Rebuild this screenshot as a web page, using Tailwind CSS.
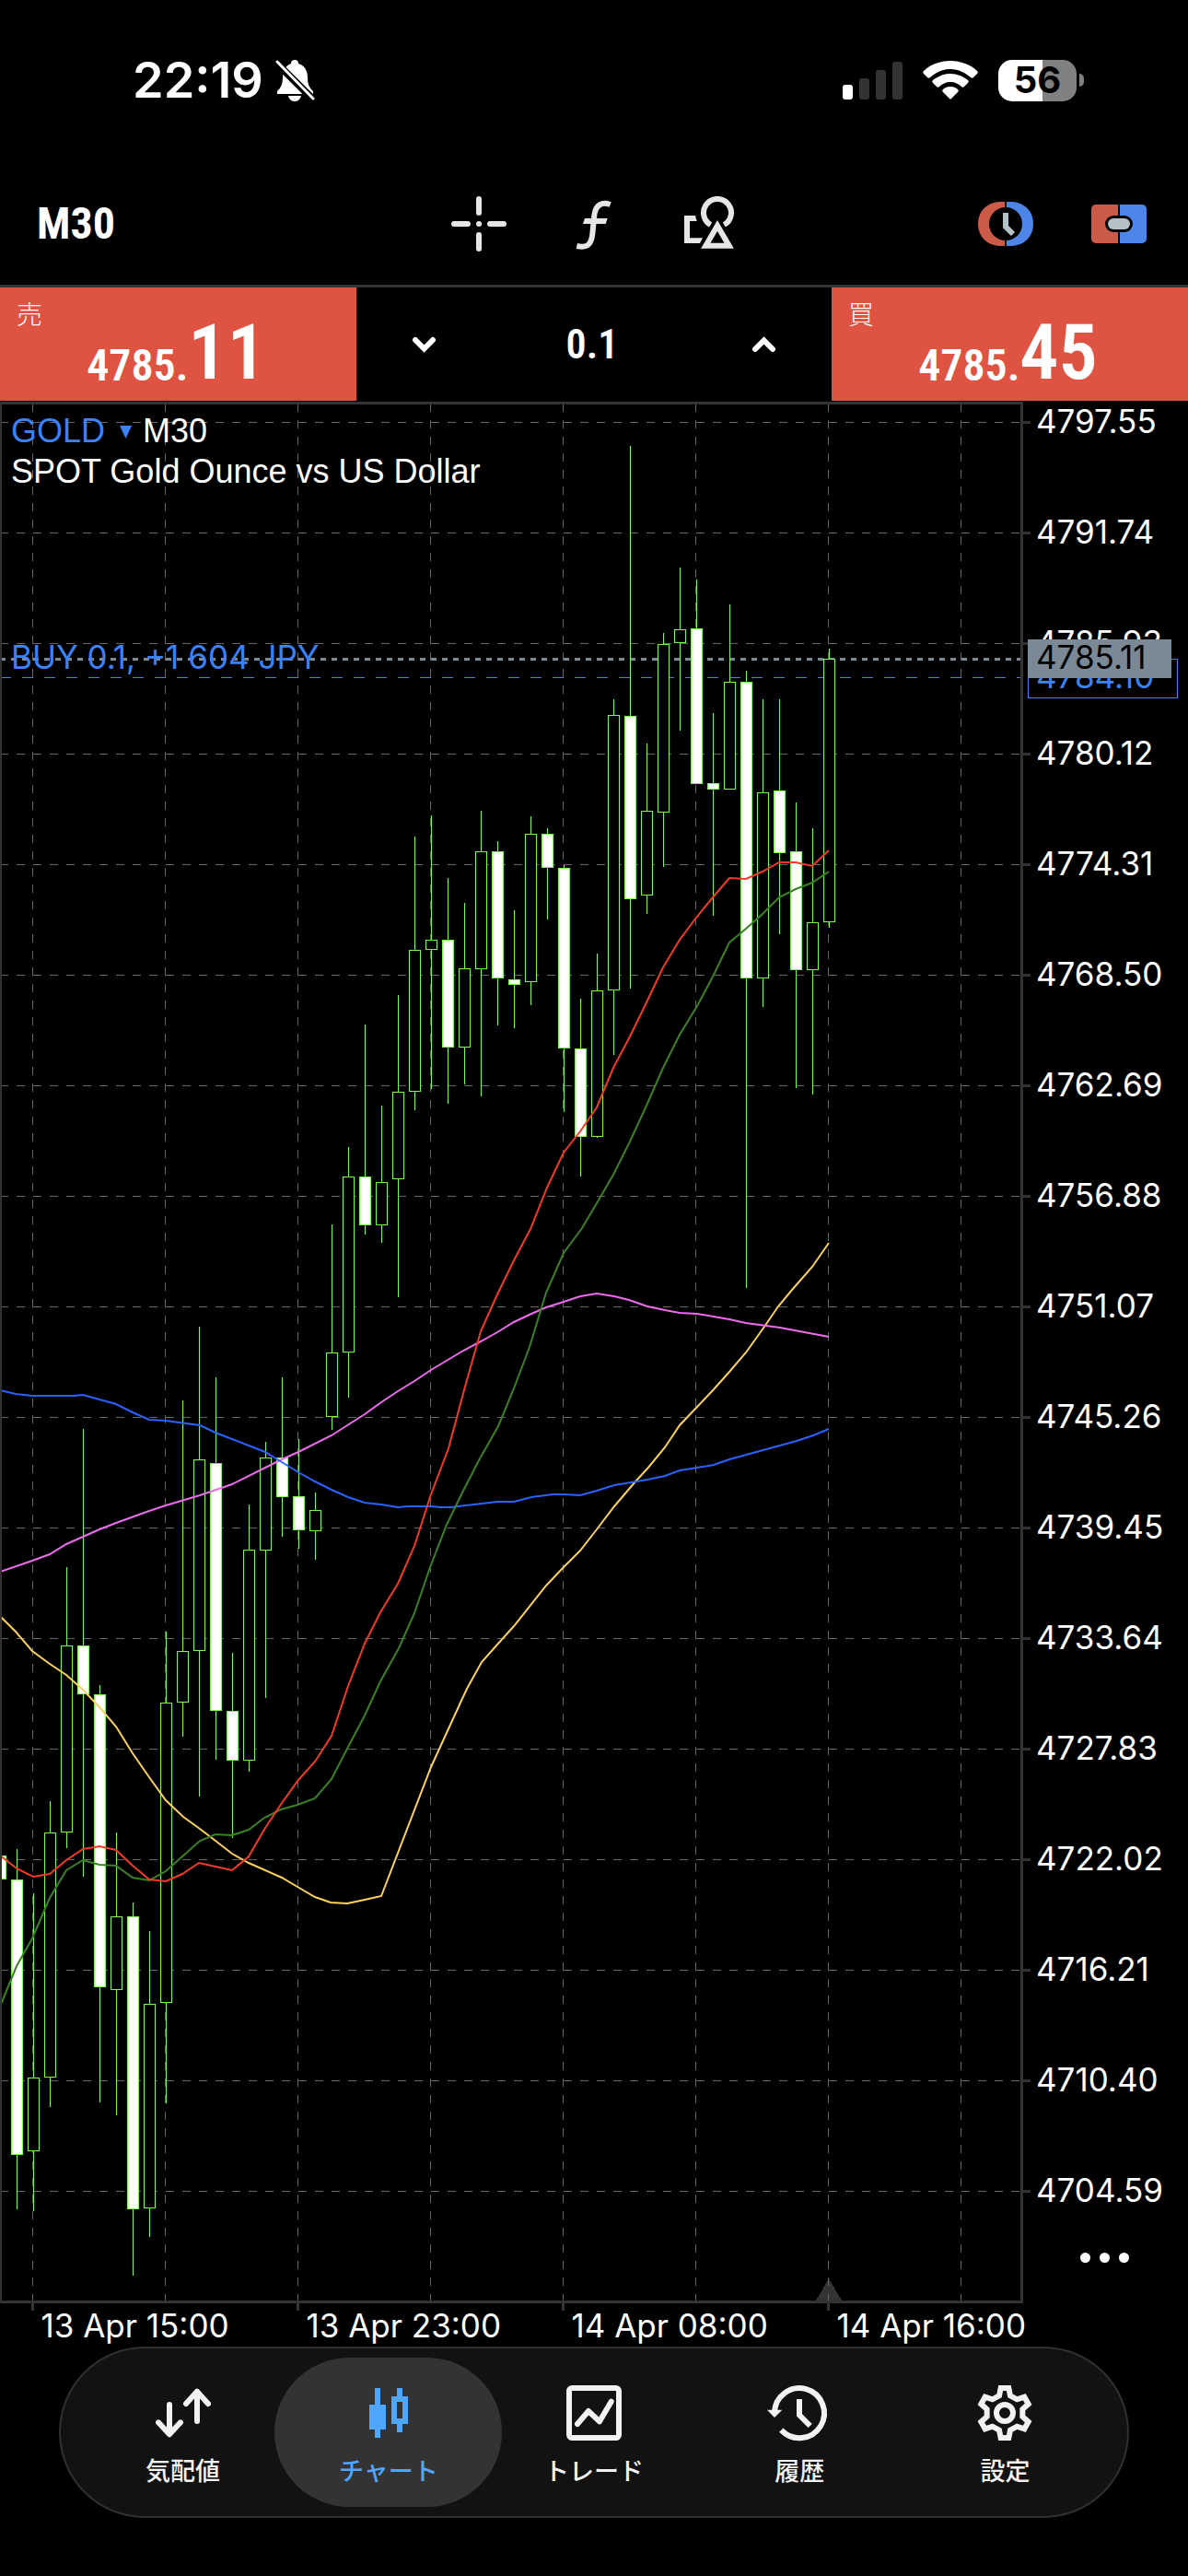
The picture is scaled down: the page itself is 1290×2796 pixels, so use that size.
<!DOCTYPE html>
<html lang="ja">
<head>
    <title>GOLD M30</title>
    <meta charset="UTF-8">
    <meta name="viewport" content="width=device-width, initial-scale=1">
    <script src="https://cdn.jsdelivr.net/npm/@tailwindcss/browser@4"></script>
</head>
<body class="bg-black text-white font-['Inter','Noto_Sans_CJK_JP',sans-serif]">

    <!-- status bar -->
    <div class="flex h-[177px] items-center justify-between pr-[113px] pb-[3px] pl-36">
        <div class="flex items-center gap-3">
            <span class="text-[54px] leading-none font-semibold">22:19</span>
            <svg class="h-12 w-11" viewBox="0 0 44 48" fill="#fff">
                <path d="M22 2c3 0 4 2 4 4 7 2 10 8 10 15 0 9 3 12 6 15v3H3v-3c3-3 6-6 6-15C9 14 12 8 18 6c0-2 1-4 4-4z"/>
                <path d="M15 41h14c-1 4-4 6-7 6s-6-2-7-6z"/>
                <path d="M2 5L42 45" stroke="#000" stroke-width="8"/>
                <path d="M3 4L42 44" stroke="#fff" stroke-width="3" stroke-linecap="round"/>
            </svg>
        </div>
        <div class="flex items-center gap-[22px]">
            <svg class="h-[42px] w-[65px]" viewBox="0 0 65 42">
                <rect x="0" y="26" width="11" height="16" rx="3" fill="#fff"/>
                <rect x="18" y="19" width="11" height="23" rx="3" fill="#333"/>
                <rect x="36" y="10" width="11" height="32" rx="3" fill="#333"/>
                <rect x="54" y="1" width="11" height="41" rx="3" fill="#333"/>
            </svg>
            <svg class="h-[42px] w-[60px]" viewBox="0 0 60 42" fill="#fff">
                <path d="M30 0C41 0 52 4 59 11c1 1 1 2 0 3l-4 4c-1 1-2 1-3 0-6-5-13-9-22-9S14 13 8 18c-1 1-2 1-3 0l-4-4c-1-1-1-2 0-3C8 4 19 0 30 0z"/>
                <path d="M30 14c7 0 14 3 19 7 1 1 1 2 0 3l-4 4c-1 1-2 1-3 0-3-3-7-5-12-5s-9 2-12 5c-1 1-2 1-3 0l-4-4c-1-1-1-2 0-3 5-4 12-7 19-7z"/>
                <path d="M30 28c3 0 6 1 8 3 1 1 1 2 0 3l-7 7c-1 1-1 1-2 0l-7-7c-1-1-1-2 0-3 2-2 5-3 8-3z"/>
            </svg>
            <div class="flex items-center gap-[3px]">
                <div class="flex h-[45px] w-[85px] items-center justify-center rounded-[15px] bg-linear-to-r from-white from-56% to-[#808080] to-56% text-[40px] leading-none font-bold text-black">56</div>
                <div class="h-[14px] w-[5px] rounded-r-full bg-[#808080]"></div>
            </div>
        </div>
    </div>

    <!-- toolbar -->
    <header class="grid h-[132px] grid-cols-[1fr_310px_1fr] items-center font-['Liberation_Sans_Narrow','Roboto_Condensed','Liberation_Sans',sans-serif]">
        <button class="justify-self-start pl-10 text-5xl leading-none font-bold">M30</button>
        <div class="flex justify-between">
            <button aria-label="Crosshair">
                <svg class="size-[60px]" viewBox="0 0 60 60" stroke="#e6e6e6" stroke-width="6" stroke-linecap="round">
                    <path d="M3 30h15M42 30h15M30 3v15M30 42v15M30 30h.1"/>
                </svg>
            </button>
            <button aria-label="Indicators">
                <svg class="size-[60px]" viewBox="403 39 180 180" fill="none" stroke="#e6e6e6" stroke-width="18">
                    <path d="M546 66C520 56 499 66 494 100L488 162C484 200 468 208 437 201"/>
                    <path d="M463 111H537L531 129H457Z" fill="#e6e6e6" stroke="none"/>
                </svg>
            </button>
            <button aria-label="Objects">
                <svg class="size-[60px]" viewBox="777 39 180 180" fill="none" stroke="#e6e6e6" stroke-width="18">
                    <path d="M872 132A45 45 0 1 1 916 132"/>
                    <path d="M894 135L932 200H856Z"/>
                    <path d="M786 102H822L827 120H804V175H846L837 192H786Z" fill="#e6e6e6" stroke="none"/>
                </svg>
            </button>
        </div>
        <div class="flex items-center gap-[63px] justify-self-end pr-[45px]">
            <button aria-label="Pending order">
                <svg class="h-12 w-[60px]" viewBox="0 0 60 48">
                    <path d="M29 0h-4C10 0 0 10 0 24s10 24 25 24h4z" fill="#cb5a49"/>
                    <path d="M31 0h4c15 0 25 10 25 24S50 48 35 48h-4z" fill="#4d86e8"/>
                    <circle cx="30" cy="24" r="18"/>
                    <path d="M30 12v15l8 8" fill="none" stroke="#b5c1c6" stroke-width="6"/>
                </svg>
            </button>
            <button aria-label="One click trading">
                <svg class="h-12 w-[60px]" viewBox="0 0 60 48">
                    <path d="M29 3H5a5 5 0 0 0-5 5v32a5 5 0 0 0 5 5h24z" fill="#cb5a49"/>
                    <path d="M31 3h24a5 5 0 0 1 5 5v32a5 5 0 0 1-5 5H31z" fill="#4d86e8"/>
                    <rect x="15" y="15" width="30" height="18" rx="9"/>
                    <rect x="18" y="18" width="24" height="12" rx="6" fill="#b5c1c6"/>
                </svg>
            </button>
        </div>
    </header>

    <!-- sell / volume / buy -->
    <section class="grid h-[127px] grid-cols-[3fr_4fr_3fr] border-t-3 border-[#333] pb-px font-['Liberation_Sans_Narrow','Roboto_Condensed','Liberation_Sans','Noto_Sans_CJK_JP',sans-serif]">
        <button class="relative flex items-end justify-center bg-[#de5341] pr-1 pb-[14px] font-semibold">
            <span class="absolute top-[14px] left-[18px] font-['Noto_Sans_CJK_JP'] text-[28px] leading-none font-light">売</span>
            <span class="text-5xl leading-none">4785.</span><span class="text-[84px] leading-[76px]">11</span>
        </button>
        <div class="flex items-center justify-between px-15">
            <button aria-label="Decrease volume">
                <svg class="h-6 w-[27px]" viewBox="0 0 27 24" fill="none" stroke="#fff" stroke-width="6" stroke-linecap="round"><path d="M4 7l9.500 9.500L23 7"/></svg>
            </button>
            <input type="text" value="0.1" aria-label="Volume" class="w-40 bg-transparent pr-1 text-center text-[44px] leading-none font-semibold">
            <button aria-label="Increase volume">
                <svg class="h-6 w-[27px]" viewBox="0 0 27 24" fill="none" stroke="#fff" stroke-width="6" stroke-linecap="round"><path d="M4 17l9.500-9.500L23 17"/></svg>
            </button>
        </div>
        <button class="relative flex items-end justify-center bg-[#de5341] pr-1 pb-[14px] font-semibold">
            <span class="absolute top-[14px] left-[18px] font-['Noto_Sans_CJK_JP'] text-[28px] leading-none font-light">買</span>
            <span class="text-5xl leading-none">4785.</span><span class="text-[84px] leading-[76px]">45</span>
        </button>
    </section>

    <!-- chart -->
    <main class="relative">
        <svg id="chart" class="block w-full" viewBox="0 436 1290 2111" shape-rendering="crispEdges">
            <path d="M886 2497L900 2473L914 2497Z" fill="#333"/>
            <g id="grid" stroke="#666" stroke-dasharray="9 9"></g>
            <path d="M0 715.500H1108" stroke="#7b8896" stroke-width="3" stroke-dasharray="6 6"/>
            <path d="M0 735.500H1108" stroke="#3b82f6" stroke-dasharray="12 12"/>
            <g id="candles" stroke="#76fb4c"></g>
            <g fill="none" stroke-width="2" shape-rendering="auto">
                <polyline stroke="#fbd15b" points="0,1754 17,1771 35,1792 54,1806 72,1818 90,1834 108,1853 126,1874 144,1903 162,1929 180,1954 199,1972 217,1985 234,1998 252,2012 270,2022 306,2038 323,2048 342,2059 359,2065 377,2066 396,2062 414,2058 468,1918 500,1848 507,1833 523,1804 540,1785 558,1765 593,1721 612,1701 630,1683 648,1660 667,1635 690,1608 703,1594 722,1571 738,1547 757,1527 775,1508 792,1489 810,1468 830,1440 845,1418 860,1400 882,1375 900,1349"/>
                <polyline stroke="#ee6bee" points="0,1706 35,1694 54,1687 72,1676 90,1668 108,1660 126,1653 162,1640 180,1634 217,1623 252,1611 288,1593 306,1584 324,1576 360,1558 396,1535 414,1522 432,1510 450,1499 468,1487 503,1466 522,1456 540,1446 558,1435 577,1426 593,1419 612,1413 630,1407 648,1404 667,1407 683,1411 703,1418 722,1422 738,1425 757,1426 792,1432 810,1436 847,1441 900,1451"/>
                <polyline stroke="#2962ff" points="0,1509 17,1513 35,1515 80,1515 90,1514 108,1519 126,1524 144,1533 162,1541 180,1542 217,1547 234,1555 252,1562 270,1569 288,1576 306,1587 324,1598 342,1608 360,1617 378,1625 396,1631 414,1633 432,1636 443,1635 468,1635 478,1636 490,1636 505,1634 540,1630 558,1630 577,1625 600,1622 613,1622 630,1623 648,1618 667,1612 703,1606 722,1602 738,1596 757,1593 775,1590 792,1584 865,1564 883,1558 900,1551"/>
                <polyline stroke="#3a8224" points="0,2178 18,2134 35,2104 54,2060 72,2030 90,2019 108,2024 126,2025 144,2038 162,2041 180,2031 198,2015 217,1998 234,1991 252,1992 270,1986 287,1973 305,1964 323,1959 342,1952 360,1931 377,1898 396,1862 413,1825 433,1789 450,1751 467,1701 485,1655 502,1620 520,1585 541,1548 558,1507 575,1462 593,1403 612,1360 632,1333 648,1306 666,1275 684,1239 702,1200 720,1159 738,1123 757,1092 774,1060 792,1023 810,1008 828,992 846,974 864,965 882,958 900,946"/>
                <polyline stroke="#f23a24" points="0,2014 18,2028 36,2037 54,2034 72,2019 90,2007 108,2004 126,2008 144,2025 162,2040 180,2042 198,2034 216,2022 234,2026 252,2030 270,2015 288,1984 306,1957 324,1932 342,1912 360,1884 378,1830 396,1784 413,1750 432,1719 450,1678 468,1622 487,1572 505,1505 522,1445 540,1405 558,1368 576,1334 594,1289 612,1251 630,1228 648,1202 666,1159 684,1125 702,1088 720,1050 738,1020 756,996 774,974 792,953 810,954 828,946 846,936 864,936 882,940 900,923"/>
            </g>
            <path id="frame" d="M.5 438V2498M0 437.500H1109.500V2498.500H0" fill="none" stroke="#333" stroke-width="3"/>
            <g id="ticks" stroke="#333" stroke-width="3"></g>
            <g id="labels" fill="#fff" font-size="35" shape-rendering="auto"></g>
            <g font-size="35">
                <rect x="1116.500" y="715.500" width="162" height="42" stroke="#3b82f6"/>
                <text x="1125" y="747" fill="#3b82f6">4784.10</text>
                <rect x="1116" y="694" width="156" height="42" fill="#7b8896"/>
                <text x="1125" y="726" fill="#000">4785.11</text>
                <text x="12" y="726" fill="#3b82f6">BUY 0.1, +1 604 JPY</text>
            </g>
        </svg>
        <div class="absolute top-[10px] left-3 flex flex-col font-['Liberation_Sans',sans-serif] text-4xl">
            <div class="flex h-11 items-center gap-2">
                <button class="flex items-center gap-4 text-[#3b82f6]">GOLD
                    <svg class="h-4 w-[13px]" viewBox="0 0 13 16" fill="#3b82f6"><path d="M0 2h13L6.500 16z"/></svg>
                </button>
                <span class="pl-1">M30</span>
            </div>
            <div class="h-11 leading-[44px]">SPOT Gold Ounce vs US Dollar</div>
        </div>
        <button aria-label="More" class="absolute right-16 bottom-[91px] flex gap-[10px]">
            <i class="size-[11px] rounded-full bg-white"></i>
            <i class="size-[11px] rounded-full bg-white"></i>
            <i class="size-[11px] rounded-full bg-white"></i>
        </button>
    </main>

    <!-- tab bar -->
    <nav class="mx-16 flex h-[186px] items-center rounded-full border-2 border-[#303030] bg-[#121212] px-[21px] text-[27px] font-medium text-[#f2f2f2]">
        <a href="#" class="-mx-3 flex h-[162px] flex-1 flex-col items-center gap-[14px] rounded-full pt-[30px]">
            <svg class="size-[60px]" viewBox="0 0 180 180" fill="none" stroke="currentColor" stroke-width="18" stroke-linecap="round" stroke-linejoin="round">
                <path d="M45 63V159M9 121L45 160L81 121M135 117V21M99 60L135 20L171 60"/>
            </svg>
            <span class="leading-10">気配値</span>
        </a>
        <a href="#" aria-current="page" class="-mx-3 flex h-[162px] flex-1 flex-col items-center gap-[14px] rounded-full bg-[#333] pt-[30px] text-[#4ea7fc]">
            <svg class="size-[60px]" viewBox="0 0 180 180" fill="currentColor">
                <path d="M45 9h18v54h18v81H63v27H45v-27H27V63h18z"/>
                <path fill-rule="evenodd" d="M117 9h18v27h18v90h-18v27h-18v-27H99V36h18zM117 54v54h18V54z"/>
            </svg>
            <span class="leading-10">チャート</span>
        </a>
        <a href="#" class="-mx-3 flex h-[162px] flex-1 flex-col items-center gap-[14px] rounded-full pt-[30px]">
            <svg class="size-[60px]" viewBox="0 0 180 180" fill="none" stroke="currentColor" stroke-width="18" stroke-linecap="round" stroke-linejoin="round">
                <rect x="9" y="9" width="162" height="162" rx="10"/>
                <path d="M36 126L72 84L108 118L146 53"/>
            </svg>
            <span class="leading-10">トレード</span>
        </a>
        <a href="#" class="-mx-3 flex h-[162px] flex-1 flex-col items-center gap-[14px] rounded-full pt-[30px]">
            <svg class="size-[60px] overflow-visible" viewBox="0 0 180 180" fill="none" stroke="currentColor" stroke-width="18">
                <path d="M9 90A81 81 0 1 1 31 146M90 45V97L125 132"/>
                <path d="M-15 80H34L9 105Z" fill="currentColor" stroke="none"/>
            </svg>
            <span class="leading-10">履歴</span>
        </a>
        <a href="#" class="-mx-3 flex h-[162px] flex-1 flex-col items-center gap-[14px] rounded-full pt-[30px]">
            <svg class="size-[60px]" viewBox="-90 -90 180 180" fill="none" stroke="currentColor" stroke-width="18">
                <circle r="27"/>
                <path d="M-18-56L-13-81H13L18-56L40-44L64-52L77-29L58-12V12L77 29L64 52L40 44L18 56L13 81H-13L-18 56L-40 44L-64 52L-77 29L-58 12V-12L-77-29L-64-52L-40-44Z"/>
            </svg>
            <span class="leading-10">設定</span>
        </a>
    </nav>
</body>
</html>

<script>
    // high, body top, body bottom, low, 1 = bearish (filled)
    const candles = [
        [2014,2014,2039,2039,1],[2007,2040,2338,2398,1],[2055,2255,2334,2400,0],[1955,1989,2254,2287,0],
        [1701,1786,1988,2006,0],[1551,1786,1838,2037,1],[1829,1839,2156,2282,1],[1989,2080,2159,2296,0],
        [2065,2080,2397,2470,1],[2096,2175,2396,2428,0],[1771,1848,2173,2283,0],[1520,1792,1847,1885,0],
        [1440,1584,1791,1950,0],[1495,1588,1856,1910,1],[1794,1857,1910,1995,1],[1633,1682,1910,1923,0],
        [1565,1582,1682,1843,0],[1495,1582,1624,1668,1],[1562,1624,1660,1681,1],[1620,1639,1661,1693,0],
        [1329,1468,1537,1552,0],[1245,1277,1467,1517,0],[1112,1277,1329,1340,1],[1200,1283,1329,1349,0],
        [1080,1185,1279,1408,0],[908,1031,1184,1205,0],[885,1020,1030,1182,0],[953,1020,1136,1198,1],
        [980,1051,1136,1177,0],[880,924,1051,1190,0],[913,924,1061,1113,1],[988,1063,1068,1116,1],
        [886,905,1065,1091,0],[899,905,941,998,1],[939,942,1137,1207,1],[1084,1138,1233,1277,1],
        [1035,1075,1233,1235,0],[759,776,1074,1145,0],[484,777,975,1073,1],[807,880,971,992,0],
        [687,699,881,941,0],[616,683,697,793,0],[629,682,850,850,1],[774,850,856,994,1],
        [656,740,856,856,0],[728,740,1061,1398,1],[759,860,1061,1093,0],[759,858,925,1014,1],
        [871,924,1052,1181,1],[899,1001,1052,1188,0],[704,715,1000,1007,0]
    ]
    const prices = ['4797.55', '4791.74', '4785.93', '4780.12', '4774.31', '4768.50', '4762.69', '4756.88', '4751.07',
        '4745.26', '4739.45', '4733.64', '4727.83', '4722.02', '4716.21', '4710.40', '4704.59']
    const dates = ['13 Apr 15:00', '13 Apr 23:00', '14 Apr 08:00', '14 Apr 16:00']

    let grid = '', ticks = '', labels = '', bars = ''

    for (let x = 35.5; x < 1108; x += 144) grid += `<path d="M${x} 438V2497"/>`

    prices.forEach((p, i) => {
        const y = 458.5 + i * 120
        grid += `<path d="M0 ${y}H1108"/>`
        ticks += `<path d="M1111 ${y}h8"/>`
        labels += `<text x="1125" y="${y + 11}">${p}</text>`
    })

    dates.forEach((d, i) => {
        const x = 35.5 + i * 288
        ticks += `<path d="M${x} 2500v8"/>`
        labels += `<text x="${x + 9}" y="2537">${d}</text>`
    })

    candles.forEach(([high, top, bottom, low, bear], i) => {
        const x = i * 18 + 0.5
        bars += `<path d="M${x} ${high}V${low}"/>`
        bars += `<rect x="${x - 6}" y="${top + 0.5}" width="12" height="${bottom - top}" fill="${bear ? '#fff' : '#000'}"/>`
    })

    document.getElementById('grid').innerHTML = grid
    document.getElementById('ticks').innerHTML = ticks
    document.getElementById('labels').innerHTML = labels
    document.getElementById('candles').innerHTML = bars
</script>
